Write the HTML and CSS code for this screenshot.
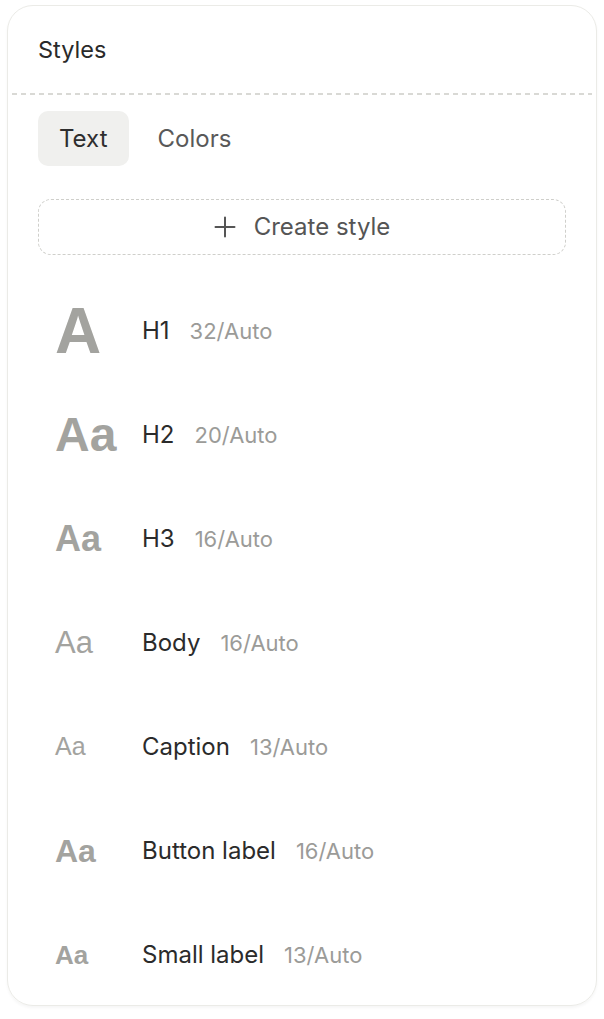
FILE: index.html
```html
<!DOCTYPE html>
<html lang="en">
  <head>
    <title>Styles</title>
    <link rel="stylesheet" href="styles.css">
  </head>
  <body>
    <main class="card">
      <header class="card-head">
        <h1 class="card-title">Styles</h1>
      </header>
      <div class="divider"></div>
      <!-- tabs -->
      <nav class="tabs">
        <button class="tab tab-active">Text</button>
        <button class="tab">Colors</button>
      </nav>
      <div class="create-wrap">
        <button class="create-btn">
          <svg class="plus" width="22" height="22" viewBox="0 0 22 22" fill="none" stroke="#555" stroke-width="2" stroke-linecap="round">
            <path d="M11 1.5v19M1.5 11h19"/>
          </svg>
          <span>Create style</span>
        </button>
      </div>
      <!-- style list -->
      <ul class="style-list">
        <li class="style-row">
          <span class="preview pv-h1">A</span>
          <span class="name">H1</span>
          <span class="spec">32/Auto</span>
        </li>
        <li class="style-row">
          <span class="preview pv-h2">Aa</span>
          <span class="name">H2</span>
          <span class="spec">20/Auto</span>
        </li>
        <li class="style-row">
          <span class="preview pv-h3">Aa</span>
          <span class="name">H3</span>
          <span class="spec">16/Auto</span>
        </li>
        <li class="style-row">
          <span class="preview pv-body">Aa</span>
          <span class="name">Body</span>
          <span class="spec">16/Auto</span>
        </li>
        <li class="style-row">
          <span class="preview pv-caption">Aa</span>
          <span class="name">Caption</span>
          <span class="spec">13/Auto</span>
        </li>
        <li class="style-row">
          <span class="preview pv-button">Aa</span>
          <span class="name">Button label</span>
          <span class="spec">16/Auto</span>
        </li>
        <li class="style-row">
          <span class="preview pv-small">Aa</span>
          <span class="name">Small label</span>
          <span class="spec">13/Auto</span>
        </li>
      </ul>
    </main>
  </body>
</html>
```

FILE: styles.css
```css
body {
  margin: 0;
  background-color: #ffffff;
  font-family: Inter, "Noto Sans", sans-serif;
}

.card {
  margin: 5px 7px;
  width: 590px;
  height: 1001px;
  box-sizing: border-box;
  border: 1.5px solid #ebebe7;
  border-radius: 26px;
  box-shadow: 0 2px 3px rgba(0, 0, 0, 0.04);
  overflow: hidden;
}

.card-head {
  height: 87px;
  padding: 0 30px;
  display: flex;
  align-items: center;
}

.card-title {
  margin: 0;
  font-size: 23.5px;
  font-weight: 400;
  color: #2a2a2a;
}

.divider {
  height: 1.5px;
  margin: 0 4px;
  background: repeating-linear-gradient(90deg, #d9d9d5 0 5px, transparent 5px 9px);
}

.tabs {
  display: flex;
  gap: 8px;
  padding: 16px 30px 0;
}

.tab {
  height: 55px;
  padding: 0 21px;
  border: none;
  border-radius: 10px;
  background: none;
  font-family: inherit;
  font-size: 24px;
  color: #595959;
}

.tab-active {
  background-color: #f0f0ee;
  color: #2e2e2e;
}

.create-wrap {
  padding: 33px 30px 0;
}

.create-btn {
  width: 100%;
  height: 56px;
  display: flex;
  align-items: center;
  justify-content: center;
  gap: 18px;
  border: 1.5px dashed #cfcfcb;
  border-radius: 13px;
  background: none;
  font-family: inherit;
  font-size: 24px;
  color: #555555;
}

.style-list {
  list-style: none;
  margin: 0;
  padding: 24px 30px 0;
}

.style-row {
  height: 104px;
  display: flex;
  align-items: center;
  padding-left: 17px;
}

.preview {
  width: 87px;
  font-family: "Liberation Sans", Arial, sans-serif;
  line-height: 1;
  color: #a3a39f;
}

.pv-h1 { font-size: 64px; font-weight: bold; }
.pv-h2 { font-size: 48px; font-weight: bold; }
.pv-h3 { font-size: 36px; font-weight: bold; }
.pv-body { font-size: 31px; }
.pv-caption { font-size: 25px; }
.pv-button { font-size: 32px; font-weight: bold; }
.pv-small { font-size: 26px; font-weight: bold; }

.name {
  font-size: 24px;
  line-height: 1;
  color: #2b2b2b;
}

.spec {
  margin-left: 20px;
  font-size: 22px;
  line-height: 1;
  color: #9b9b98;
}
```
